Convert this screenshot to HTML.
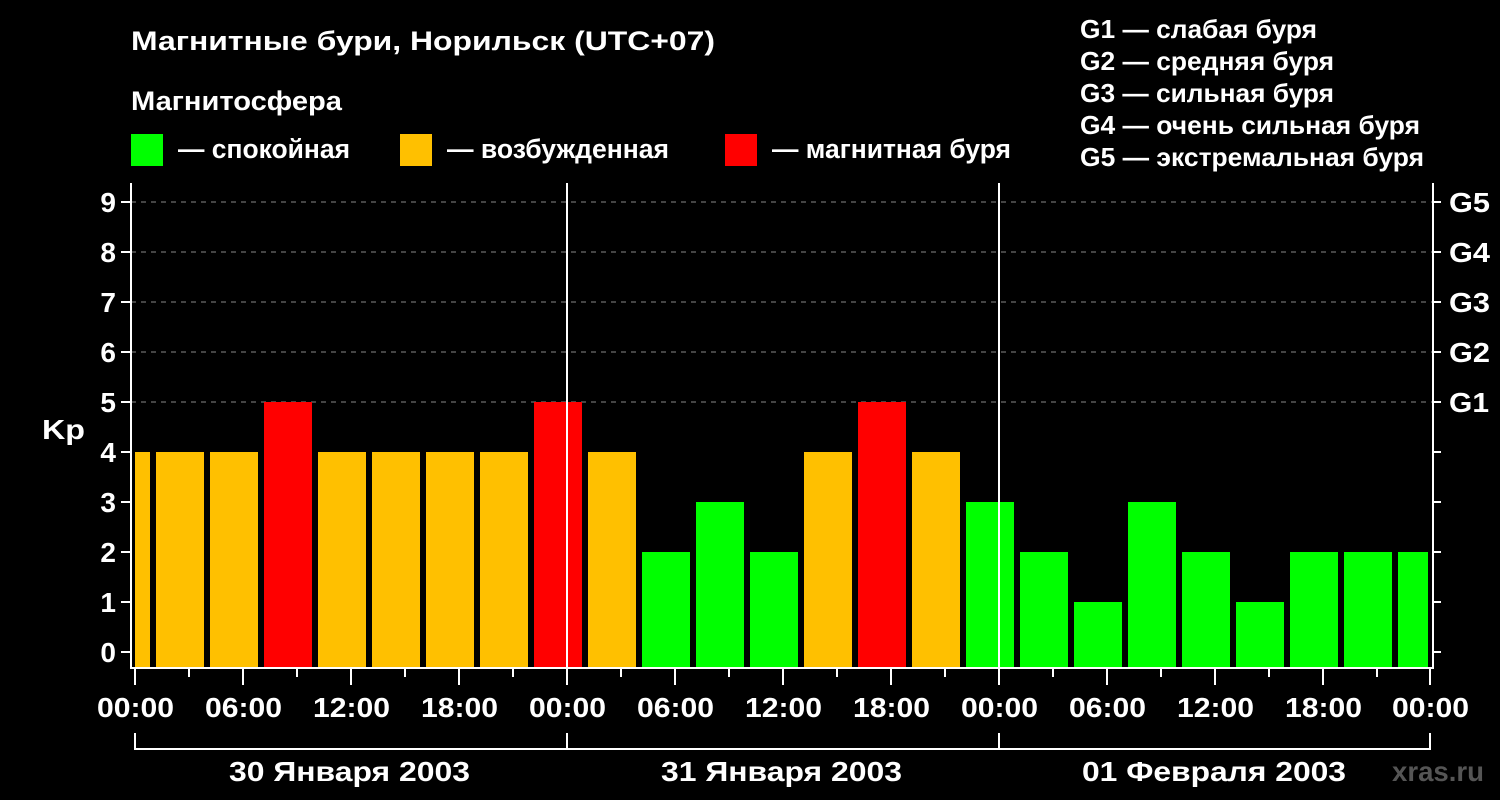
<!DOCTYPE html>
<html><head><meta charset="utf-8"><style>
html,body{margin:0;padding:0;background:#000;}
svg{display:block;font-family:"Liberation Sans",sans-serif;font-weight:bold;}
</style></head><body>
<svg width="1500" height="800" viewBox="0 0 1500 800" xmlns="http://www.w3.org/2000/svg">
<rect width="1500" height="800" fill="#000"/>
<g fill="#fff" font-size="27">
<text x="131" y="50" textLength="584" lengthAdjust="spacingAndGlyphs">Магнитные бури, Норильск (UTC+07)</text>
<text x="131" y="110" textLength="211" lengthAdjust="spacingAndGlyphs">Магнитосфера</text>
<text x="178" y="158" textLength="172" lengthAdjust="spacingAndGlyphs">— спокойная</text>
<text x="447" y="158" textLength="222" lengthAdjust="spacingAndGlyphs">— возбужденная</text>
<text x="772" y="158" textLength="239" lengthAdjust="spacingAndGlyphs">— магнитная буря</text>
<text x="1080" y="38" font-size="26" textLength="237" lengthAdjust="spacingAndGlyphs">G1 — слабая буря</text>
<text x="1080" y="70" font-size="26" textLength="254" lengthAdjust="spacingAndGlyphs">G2 — средняя буря</text>
<text x="1080" y="102" font-size="26" textLength="254" lengthAdjust="spacingAndGlyphs">G3 — сильная буря</text>
<text x="1080" y="134" font-size="26" textLength="340" lengthAdjust="spacingAndGlyphs">G4 — очень сильная буря</text>
<text x="1080" y="166" font-size="26" textLength="344" lengthAdjust="spacingAndGlyphs">G5 — экстремальная буря</text>
</g>
<rect x="131" y="134" width="32" height="32" fill="#00ff00"/>
<rect x="400" y="134" width="32" height="32" fill="#ffc000"/>
<rect x="725" y="134" width="32" height="32" fill="#ff0000"/>

<g stroke="#888" stroke-width="1" stroke-dasharray="5,5">
<line x1="131" y1="202" x2="1433" y2="202"/>
<line x1="131" y1="252" x2="1433" y2="252"/>
<line x1="131" y1="302" x2="1433" y2="302"/>
<line x1="131" y1="352" x2="1433" y2="352"/>
<line x1="131" y1="402" x2="1433" y2="402"/>
</g>

<defs><clipPath id="c"><rect x="135" y="183" width="1293" height="485"/></clipPath></defs>
<g clip-path="url(#c)">
<rect x="102" y="452" width="48" height="216" fill="#ffc000"/>
<rect x="156" y="452" width="48" height="216" fill="#ffc000"/>
<rect x="210" y="452" width="48" height="216" fill="#ffc000"/>
<rect x="264" y="402" width="48" height="266" fill="#ff0000"/>
<rect x="318" y="452" width="48" height="216" fill="#ffc000"/>
<rect x="372" y="452" width="48" height="216" fill="#ffc000"/>
<rect x="426" y="452" width="48" height="216" fill="#ffc000"/>
<rect x="480" y="452" width="48" height="216" fill="#ffc000"/>
<rect x="534" y="402" width="48" height="266" fill="#ff0000"/>
<rect x="588" y="452" width="48" height="216" fill="#ffc000"/>
<rect x="642" y="552" width="48" height="116" fill="#00ff00"/>
<rect x="696" y="502" width="48" height="166" fill="#00ff00"/>
<rect x="750" y="552" width="48" height="116" fill="#00ff00"/>
<rect x="804" y="452" width="48" height="216" fill="#ffc000"/>
<rect x="858" y="402" width="48" height="266" fill="#ff0000"/>
<rect x="912" y="452" width="48" height="216" fill="#ffc000"/>
<rect x="966" y="502" width="48" height="166" fill="#00ff00"/>
<rect x="1020" y="552" width="48" height="116" fill="#00ff00"/>
<rect x="1074" y="602" width="48" height="66" fill="#00ff00"/>
<rect x="1128" y="502" width="48" height="166" fill="#00ff00"/>
<rect x="1182" y="552" width="48" height="116" fill="#00ff00"/>
<rect x="1236" y="602" width="48" height="66" fill="#00ff00"/>
<rect x="1290" y="552" width="48" height="116" fill="#00ff00"/>
<rect x="1344" y="552" width="48" height="116" fill="#00ff00"/>
<rect x="1398" y="552" width="48" height="116" fill="#00ff00"/>
</g>

<g stroke="#fff" stroke-width="2" fill="none">
<line x1="567" y1="183" x2="567" y2="668"/>
<line x1="999" y1="183" x2="999" y2="668"/>
<polyline points="131,183 131,668 1433,668 1433,183"/>
<path d="M121 202H131M121 252H131M121 302H131M121 352H131M121 402H131M121 452H131M121 502H131M121 552H131M121 602H131M121 652H131"/>
<path d="M1433 202H1441M1433 252H1441M1433 302H1441M1433 352H1441M1433 402H1441M1433 452H1441M1433 502H1441M1433 552H1441M1433 602H1441M1433 652H1441"/>
<path d="M135 668V685M243 668V685M351 668V685M459 668V685M567 668V685M675 668V685M783 668V685M891 668V685M999 668V685M1107 668V685M1215 668V685M1323 668V685M1430 668V685"/>
<path d="M189 668V677M297 668V677M405 668V677M513 668V677M621 668V677M729 668V677M837 668V677M945 668V677M1053 668V677M1161 668V677M1269 668V677M1377 668V677"/>
<path d="M135 733V749H1430V733M567 733V749M999 733V749"/>
</g>

<g fill="#fff" font-size="28" text-anchor="end">
<text x="116" y="212">9</text><text x="116" y="262">8</text><text x="116" y="312">7</text>
<text x="116" y="362">6</text><text x="116" y="412">5</text><text x="116" y="462">4</text>
<text x="116" y="512">3</text><text x="116" y="562">2</text><text x="116" y="612">1</text>
<text x="116" y="662">0</text>
</g>
<text x="42" y="439" fill="#fff" font-size="28" textLength="43" lengthAdjust="spacingAndGlyphs">Kp</text>
<g fill="#fff" font-size="28">
<text x="1449" y="212" textLength="41" lengthAdjust="spacingAndGlyphs">G5</text>
<text x="1449" y="262" textLength="41" lengthAdjust="spacingAndGlyphs">G4</text>
<text x="1449" y="312" textLength="41" lengthAdjust="spacingAndGlyphs">G3</text>
<text x="1449" y="362" textLength="41" lengthAdjust="spacingAndGlyphs">G2</text>
<text x="1449" y="412" textLength="40" lengthAdjust="spacingAndGlyphs">G1</text>
</g>
<g fill="#fff" font-size="28">
<text x="97" y="717" textLength="77" lengthAdjust="spacingAndGlyphs">00:00</text>
<text x="205" y="717" textLength="77" lengthAdjust="spacingAndGlyphs">06:00</text>
<text x="313" y="717" textLength="77" lengthAdjust="spacingAndGlyphs">12:00</text>
<text x="421" y="717" textLength="77" lengthAdjust="spacingAndGlyphs">18:00</text>
<text x="529" y="717" textLength="77" lengthAdjust="spacingAndGlyphs">00:00</text>
<text x="637" y="717" textLength="77" lengthAdjust="spacingAndGlyphs">06:00</text>
<text x="745" y="717" textLength="77" lengthAdjust="spacingAndGlyphs">12:00</text>
<text x="853" y="717" textLength="77" lengthAdjust="spacingAndGlyphs">18:00</text>
<text x="961" y="717" textLength="77" lengthAdjust="spacingAndGlyphs">00:00</text>
<text x="1069" y="717" textLength="77" lengthAdjust="spacingAndGlyphs">06:00</text>
<text x="1177" y="717" textLength="77" lengthAdjust="spacingAndGlyphs">12:00</text>
<text x="1285" y="717" textLength="77" lengthAdjust="spacingAndGlyphs">18:00</text>
<text x="1392" y="717" textLength="77" lengthAdjust="spacingAndGlyphs">00:00</text>
</g>
<g fill="#fff" font-size="28">
<text x="229" y="781" textLength="241" lengthAdjust="spacingAndGlyphs">30 Января 2003</text>
<text x="661" y="781" textLength="241" lengthAdjust="spacingAndGlyphs">31 Января 2003</text>
<text x="1082" y="781" textLength="264" lengthAdjust="spacingAndGlyphs">01 Февраля 2003</text>
</g>
<text x="1392" y="781" fill="#555" font-size="28" textLength="92" lengthAdjust="spacingAndGlyphs">xras.ru</text>
</svg>
</body></html>
